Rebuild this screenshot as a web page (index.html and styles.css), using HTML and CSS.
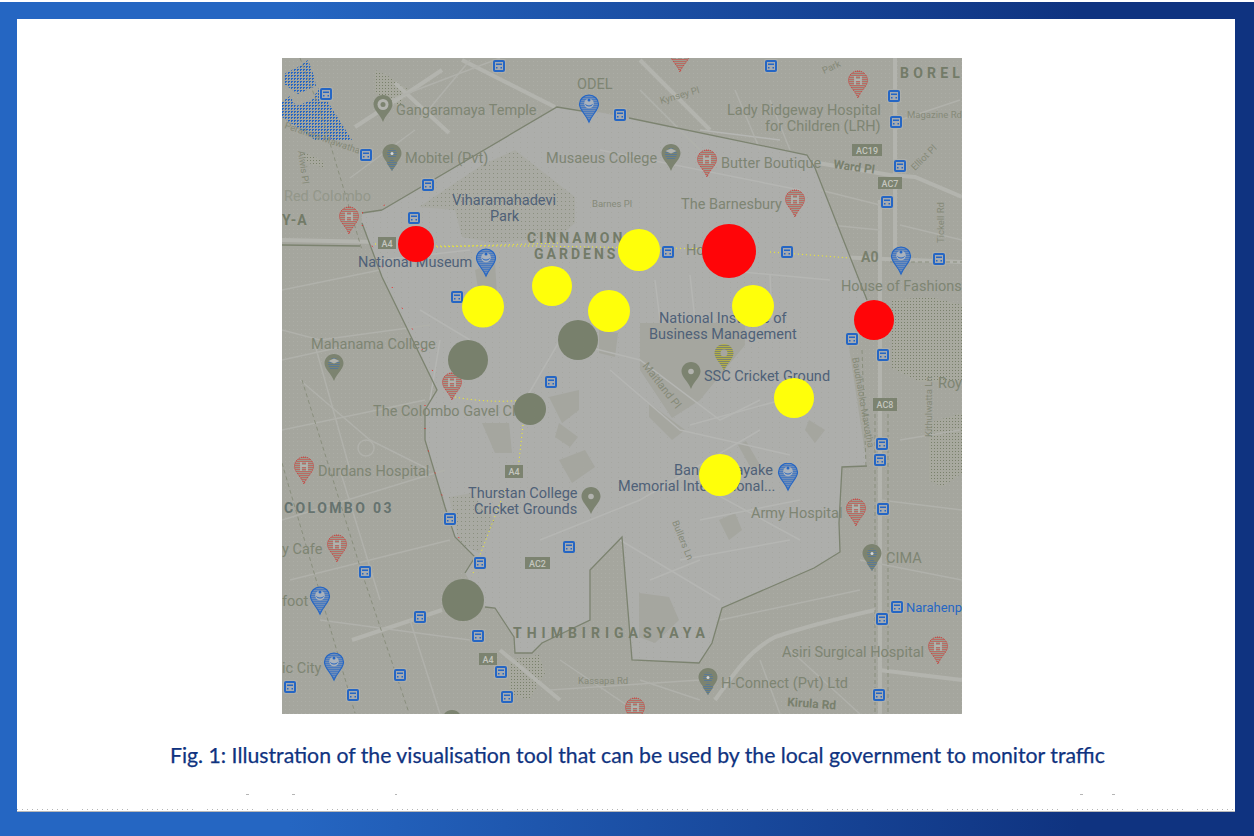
FILE: index.html
```html
<!DOCTYPE html>
<html lang="en">
<head>
<meta charset="utf-8">
<title>Fig. 1</title>
<link rel="stylesheet" href="styles.css">
</head>
<body>
<main class="frame">
<figure class="panel">
<svg class="map" viewBox="282 58 680 656" width="680" height="656" role="img" aria-label="Traffic map of Colombo">
<defs>
<pattern id="speck" width="4" height="4" patternUnits="userSpaceOnUse"><rect x="1" y="1" width="1" height="1" fill="#acada6"/></pattern>
<pattern id="speck-light" width="7" height="5" patternUnits="userSpaceOnUse"><rect x="2" y="2" width="1" height="1" fill="#a6a7a1"/></pattern>
<pattern id="park" width="3" height="3" patternUnits="userSpaceOnUse"><rect width="3" height="3" fill="#a8a99f"/><rect x="1" y="1" width="1" height="1" fill="#7a816c"/></pattern>
<pattern id="park-thin" width="4" height="4" patternUnits="userSpaceOnUse"><rect width="4" height="4" fill="#a9aaa3"/><rect x="1" y="1" width="1" height="1" fill="#8b9080"/></pattern>
<pattern id="water" width="3" height="3" patternUnits="userSpaceOnUse"><rect width="3" height="3" fill="#a4a59d"/><rect width="2" height="1" fill="#2566c4"/><rect y="1" width="1" height="1" fill="#2566c4"/></pattern>
<pattern id="dot-blue" width="2" height="2" patternUnits="userSpaceOnUse"><rect width="2" height="2" fill="#6f8db8"/><rect width="1" height="1" fill="#2566c4"/></pattern>
<pattern id="dot-red" width="2" height="2" patternUnits="userSpaceOnUse"><rect width="2" height="2" fill="#9a9c90"/><rect width="1" height="1" fill="#d83a38"/></pattern>
<pattern id="dot-mix" width="2" height="2" patternUnits="userSpaceOnUse"><rect width="2" height="2" fill="#7c8370"/><rect width="1" height="1" fill="#e8d820"/></pattern>
<pattern id="dot-slate" width="2" height="2" patternUnits="userSpaceOnUse"><rect width="2" height="2" fill="#7c8370"/><rect width="1" height="1" fill="#3a6fb8"/></pattern>
<path id="drop" d="M9.5 0C4.2 0 0 4.1 0 9.3c0 5.8 6.200 9.600 9.500 17.700C12.800 18.900 19 15.100 19 9.300 19 4.100 14.800 0 9.500 0z"/>
<symbol id="pin-blue" viewBox="0 0 19 27" width="19" height="27" overflow="visible"><use href="#drop" fill="url(#dot-blue)" stroke="#2566c4" stroke-width="1.200"/><circle cx="9.500" cy="8.500" r="4.800" fill="#a9b2bd"/><circle cx="9.500" cy="5" r="1.500" fill="#2566c4"/><path d="M6 9.500c1.500 2 5.500 2 7 0" fill="none" stroke="#2566c4"/></symbol>
<symbol id="pin-red" viewBox="0 0 19 27" width="19" height="27" overflow="visible"><use href="#drop" fill="url(#dot-red)" stroke="#c9403c" stroke-dasharray="1 1"/><path d="M6.500 5v9M12.500 5v9M6.500 9h6" stroke="#b2b3ae" stroke-width="1.800" fill="none"/></symbol>
<symbol id="pin-gray" viewBox="0 0 19 27" width="19" height="27" overflow="visible"><use href="#drop" fill="#7c8370"/><circle cx="9.500" cy="9.500" r="2.800" fill="#b2b3ae"/></symbol>
<symbol id="pin-slate" viewBox="0 0 19 27" width="19" height="27" overflow="visible"><use href="#drop" fill="#7c8370"/><path d="M9.500 15L15 19 9.500 27 4 19z" fill="url(#dot-slate)"/><circle cx="9.500" cy="9.500" r="5" fill="url(#dot-slate)"/><circle cx="9.500" cy="9.500" r="1.500" fill="#d8d8d4"/></symbol>
<symbol id="pin-temple" viewBox="0 0 19 27" width="19" height="27" overflow="visible"><use href="#drop" fill="#7c8370"/><circle cx="9.500" cy="9.500" r="5.500" fill="#b2b3ae"/><circle cx="9.500" cy="9.500" r="2.500" fill="#7c8370"/></symbol>
<symbol id="pin-school" viewBox="0 0 19 27" width="19" height="27" overflow="visible"><use href="#drop" fill="#7c8370"/><circle cx="9.500" cy="10" r="6" fill="url(#dot-slate)"/><path d="M4 7l5.500-2.500L15 7l-5.500 2.500z" fill="#b2b3ae"/></symbol>
<symbol id="pin-mix" viewBox="0 0 19 27" width="19" height="27" overflow="visible"><use href="#drop" fill="url(#dot-mix)"/><circle cx="9.500" cy="9" r="3.500" fill="#a6a69e"/></symbol>
<symbol id="bus" viewBox="-2 -2 16 16" width="16" height="16"><rect x="-1" y="-1" width="14" height="14" rx="2" fill="#aeafa9"/><rect x="1" y="1" width="10" height="10" rx="1" fill="#a5aab0" stroke="#2566c4" stroke-width="2"/><rect x="3" y="3.500" width="6" height="1.500" fill="#2566c4"/><rect x="3" y="7" width="1.500" height="1.500" fill="#2566c4"/><rect x="7.500" y="7" width="1.500" height="1.500" fill="#2566c4"/></symbol>
</defs>

<rect class="land" x="282" y="58" width="680" height="656"/>
<rect x="282" y="58" width="680" height="656" fill="url(#speck)"/>

<polygon fill="url(#water)" points="284,74 300,66 308,60 314,76 316,86 298,94 284,84"/>
<polygon fill="url(#water)" points="282,102 290,96 296,106 312,100 319,88 352,140 315,140 282,117"/>
<polygon fill="url(#park)" points="375,70 388,76 409,90 399,107 375,93"/>
<polygon fill="url(#park)" points="302,152 322,160 325,168 305,162"/>
<polygon fill="url(#park)" points="892,300 930,297 962,305 962,382 920,382 892,368"/>
<polygon fill="url(#park)" points="929,423 962,413 962,473 942,487 929,480"/>
<polygon fill="url(#park)" points="509,660 539,655 545,673 529,700 509,693"/>

<g class="road">
<path d="M282 240L380 242 620 248 860 258 962 262"/>
<path d="M880 200V714"/>
<path d="M895 58V250"/>
<path d="M715 700C735 672 750 650 775 637 810 625 840 618 875 610"/>
<path d="M879 670L962 680"/>
<path d="M352 640L442 610"/>
<path d="M355 127L415 88 442 70"/>
<path d="M395 83L449 133"/>
<path d="M462 60L555 107"/>
<path d="M640 60L710 130"/>
<path d="M800 160L890 175 915 177 962 197"/>
<path d="M500 650L560 700"/>
<path d="M540 155L620 250"/>
</g>

<polygon class="district" points="382,210 557,107 588,110 629,118 807,155 815,168 867,300 849,347 867,466 842,467 839,523 840,552 814,568 722,608 712,643 699,663 632,660 622,537 590,570 590,620 542,643 532,653 515,653 514,637 495,608 485,607 465,573 475,557 455,537 445,507 425,440 425,410 437,390 382,277 362,223 362,213"/>
<polygon points="382,210 557,107 588,110 629,118 807,155 815,168 867,300 849,347 867,466 842,467 839,523 840,552 814,568 722,608 712,643 699,663 632,660 622,537 590,570 590,620 542,643 532,653 515,653 514,637 495,608 485,607 465,573 475,557 455,537 445,507 425,440 425,410 437,390 382,277 362,223 362,213" fill="url(#speck-light)"/>

<polygon class="block" points="640,323 745,323 745,345 700,400 672,418 640,370"/>
<polygon class="block" points="549,397 579,390 579,410 562,423"/>
<polygon class="block" points="482,423 509,423 512,453 495,453"/>
<polygon class="block" points="559,460 585,450 595,467 572,483"/>
<polygon class="block" points="559,423 578,437 570,447 555,437"/>
<polygon class="block" points="649,403 685,430 672,440 649,417"/>
<polygon class="block" points="719,520 735,513 742,530 729,540"/>
<polygon class="block" points="809,420 825,430 815,443 805,430"/>
<polygon class="block" points="738,445 746,441 760,465 752,470"/>
<polygon class="block" points="639,593 669,597 679,620 655,643 639,637"/>
<polygon class="block" points="599,330 618,333 615,357 599,353"/>
<polygon class="block" points="475,270 495,262 497,296 480,300"/>
<polygon fill="url(#park-thin)" points="419,207 482,165 515,150 575,197 575,223 559,237 495,243 462,237 455,210"/>
<polygon fill="url(#park-thin)" points="449,497 472,493 495,520 479,553 459,543"/>

<g class="road-light">
<path d="M525 400L560 340 640 360 720 420 760 400"/>
<path d="M690 425L800 395"/>
<path d="M610 370L680 430 790 455"/>
<path d="M540 540L640 500 760 430"/>
<path d="M620 540L720 600"/>
<path d="M380 260L470 250"/>
<path d="M690 480L800 540"/>
<path d="M700 130L780 140"/>
<path d="M600 150L800 190"/>
<path d="M720 270L830 280"/>
<path d="M655 280L660 320M690 275L695 320M770 275L772 320"/>
<path d="M700 520L800 500M680 560L790 540M650 580L700 560"/>
<path d="M420 310L470 340M440 340L430 400"/>
</g>

<g class="street">
<path d="M282 330L320 340 430 325"/>
<path d="M300 380L370 440 430 470"/>
<path d="M282 430L425 400"/>
<path d="M282 520L445 470"/>
<path d="M290 580L450 540"/>
<path d="M320 620L470 640"/>
<path d="M410 620L440 714"/>
<path d="M282 290L380 270"/>
<path d="M282 360L350 345M315 345L350 470M340 470L380 600"/>
<path d="M390 100L500 58"/>
<path d="M420 120L470 60"/>
<path d="M350 178L415 130"/>
<path d="M640 90L700 150"/>
<path d="M735 90L760 150"/>
<path d="M770 100L790 150"/>
<path d="M900 120L960 100"/>
<path d="M900 225L962 240"/>
<path d="M820 190L880 205M830 225L880 230"/>
<path d="M900 440L960 430"/>
<path d="M880 500L962 510"/>
<path d="M860 560L962 580"/>
<path d="M790 650L860 714"/>
<path d="M760 660L780 714"/>
<path d="M560 660L640 714"/>
<path d="M550 690L700 680"/>
<path d="M640 680L700 700M720 620L860 590"/>
<circle cx="366" cy="448" r="8"/>
</g>

<g class="border">
<path d="M382 210L557 107 588 112M629 118L807 155 815 168 867 300"/>
<path d="M867 466L842 467 839 523 840 552 814 568 722 608 712 643 699 663 632 660 622 537 590 570 590 620 542 643 532 653 515 653 514 637 495 608 485 607"/>
<path d="M465 573L475 557 455 537 445 507 425 440 425 410 437 390 382 277 362 223"/>
<path d="M362 213L382 210"/>
<path d="M282 245L360 246"/>
</g>
<g class="dash">
<path d="M300 58L320 110 362 250"/>
<path d="M302 380L362 573 409 713"/>
<path d="M282 463L355 713"/>
<path d="M890 262H962"/>
<path d="M875 400V714M888 400V714"/>
<path d="M862 350L866 466"/>
</g>

<g class="traffic-yellow">
<path d="M375 244H398M436 246L530 246 720 249M770 252L850 258M437 247L560 243"/>
<path d="M455 397C480 402 510 402 522 400M523 425L518 470M505 490L480 555L472 576"/>
</g>
<g class="traffic-red">
<path d="M362 213L385 205M362 225L437 380M425 405V440L445 505 462 545"/>
</g>

<g class="label">
<text x="396" y="115">Gangaramaya Temple</text>
<text x="405" y="163">Mobitel (Pvt)</text>
<text class="faint" x="284" y="201">Red Colombo</text>
<text x="311" y="349">Mahanama College</text>
<text x="546" y="163">Musaeus College</text>
<text x="721" y="168">Butter Boutique</text>
<text x="681" y="209">The Barnesbury</text>
<text x="727" y="115">Lady Ridgeway Hospital</text>
<text x="765" y="131">for Children (LRH)</text>
<text x="841" y="291">House of Fashions</text>
<text x="938" y="388">Roy</text>
<text x="373" y="416">The Colombo Gavel Club</text>
<text x="318" y="476">Durdans Hospital</text>
<text x="751" y="518">Army Hospital</text>
<text x="886" y="563">CIMA</text>
<text x="782" y="657">Asiri Surgical Hospital</text>
<text x="721" y="688">H-Connect (Pvt) Ltd</text>
<text x="282" y="554">y Cafe</text>
<text x="282" y="606">foot</text>
<text x="282" y="673">ic City</text>
<text x="577" y="89">ODEL</text>
<text x="686" y="255">Ho</text>
</g>
<g class="label poi">
<text x="452" y="205">Viharamahadevi</text>
<text x="490" y="221">Park</text>
<text x="358" y="267">National Museum</text>
<text x="659" y="323">National Institute of</text>
<text x="649" y="339">Business Management</text>
<text x="704" y="381">SSC Cricket Ground</text>
<text x="468" y="498">Thurstan College</text>
<text x="474" y="514">Cricket Grounds</text>
<text x="674" y="475">Bandaranayake</text>
<text x="618" y="491">Memorial International...</text>
<text class="blue" x="906" y="612">Narahenp</text>
</g>
<g class="area">
<text x="527" y="243">CINNAMON</text>
<text x="534" y="259">GARDENS</text>
<text class="wide" x="900" y="78">BOREL</text>
<text class="widest" x="513" y="638">THIMBIRIGASYAYA</text>
<text class="slate" x="284" y="513">COLOMBO 03</text>
<text class="tight" x="282" y="225">Y-A</text>
</g>
<g class="street-name">
<text x="661" y="104" transform="rotate(-16 661 104)">Kynsey Pl</text>
<text x="824" y="74" transform="rotate(-25 824 74)">Park</text>
<text x="284" y="128" transform="rotate(19 284 128)">Perahera Mawatha</text>
<text x="298" y="151" transform="rotate(82 298 151)">Alwis Pl</text>
<text x="592" y="207">Barnes Pl</text>
<text x="907" y="118">Magazine Rd</text>
<text x="915" y="171" transform="rotate(-45 915 171)">Elliot Pl</text>
<text x="944" y="243" transform="rotate(-90 944 243)">Tickell Rd</text>
<text x="852" y="358" transform="rotate(80 852 358)">Baudhaloka Mawatha</text>
<text x="932" y="437" transform="rotate(-90 932 437)">Kithulwatta Ln</text>
<text class="big" x="642" y="366" transform="rotate(52 642 366)">Maitland Pl</text>
<text x="672" y="522" transform="rotate(68 672 522)">Bullers Ln</text>
<text x="578" y="684">Kassapa Rd</text>
<text class="strong" x="833" y="168" transform="rotate(8 833 168)">Ward Pl</text>
<text class="strong" x="787" y="706" transform="rotate(4 787 706)">Kirula Rd</text>
<text class="strong a0" x="861" y="262">A0</text>
</g>

<g class="shield">
<rect x="378" y="237" width="18" height="12"/><rect x="505" y="465" width="18" height="13"/><rect x="479" y="653" width="18" height="12"/>
<rect x="852" y="144" width="30" height="12"/><rect x="878" y="177" width="24" height="12"/><rect x="873" y="398" width="24" height="13"/><rect x="525" y="557" width="25" height="12"/>
</g>
<g class="shield-text">
<text x="387" y="247">A4</text><text x="514" y="475">A4</text><text x="488" y="663">A4</text>
<text x="867" y="154">AC19</text><text x="890" y="187">AC7</text><text x="885" y="408">AC8</text><text x="537.500" y="567">AC2</text>
</g>

<use href="#pin-temple" x="373.500" y="95"/>
<use href="#pin-slate" x="382.500" y="144"/>
<use href="#pin-blue" x="579.500" y="95"/>
<use href="#pin-blue" x="476.500" y="249"/>
<use href="#pin-red" x="339.500" y="207"/>
<use href="#pin-school" x="324.500" y="354"/>
<use href="#pin-red" x="442.500" y="373"/>
<use href="#pin-school" x="661.500" y="144"/>
<use href="#pin-red" x="697.500" y="150"/>
<use href="#pin-red" x="785.500" y="190"/>
<use href="#pin-red" x="670.500" y="45"/>
<use href="#pin-red" x="848.500" y="71"/>
<use href="#pin-blue" x="891.500" y="247"/>
<use href="#pin-gray" x="681.500" y="362"/>
<use href="#pin-mix" x="714.500" y="344"/>
<use href="#pin-red" x="294.500" y="457"/>
<use href="#pin-red" x="327.500" y="535"/>
<use href="#pin-blue" x="310.500" y="587"/>
<use href="#pin-blue" x="324.500" y="653"/>
<use href="#pin-gray" x="581.500" y="487"/>
<use href="#pin-blue" x="778.500" y="463"/>
<use href="#pin-red" x="846.500" y="499"/>
<use href="#pin-slate" x="862.500" y="544"/>
<use href="#pin-red" x="928.500" y="637"/>
<use href="#pin-slate" x="698.500" y="668"/>
<use href="#pin-red" x="625.500" y="698"/>
<use href="#pin-gray" x="442.500" y="710"/>

<use href="#bus" x="491" y="58"/><use href="#bus" x="318" y="86"/><use href="#bus" x="358" y="147"/><use href="#bus" x="420" y="177"/><use href="#bus" x="406" y="210"/><use href="#bus" x="449" y="289"/><use href="#bus" x="543" y="374"/><use href="#bus" x="612" y="107"/>
<use href="#bus" x="763" y="58"/><use href="#bus" x="886" y="88"/><use href="#bus" x="888" y="114"/><use href="#bus" x="892" y="158"/><use href="#bus" x="879" y="194"/><use href="#bus" x="660" y="244"/><use href="#bus" x="779" y="244"/><use href="#bus" x="931" y="251"/><use href="#bus" x="844" y="331"/><use href="#bus" x="875" y="347"/>
<use href="#bus" x="442" y="511"/><use href="#bus" x="472" y="555"/><use href="#bus" x="357" y="564"/><use href="#bus" x="412" y="609"/><use href="#bus" x="470" y="628"/><use href="#bus" x="493" y="664"/><use href="#bus" x="499" y="689"/><use href="#bus" x="392" y="667"/><use href="#bus" x="345" y="687"/><use href="#bus" x="282" y="679"/><use href="#bus" x="561" y="539"/>
<use href="#bus" x="874" y="436"/><use href="#bus" x="872" y="452"/><use href="#bus" x="875" y="501"/><use href="#bus" x="874" y="611"/><use href="#bus" x="889" y="599"/><use href="#bus" x="871" y="687"/>

<g class="spot-red"><circle cx="416" cy="244" r="18"/><circle cx="729" cy="251" r="27"/><circle cx="874" cy="320" r="20"/></g>
<g class="spot-yellow"><circle cx="483" cy="306.500" r="21"/><circle cx="552" cy="286" r="20"/><circle cx="609" cy="311" r="21"/><circle cx="639" cy="250" r="21"/><circle cx="753" cy="306" r="21"/><circle cx="794" cy="398" r="20"/><circle cx="720" cy="475" r="21"/></g>
<g class="spot-gray"><circle cx="578" cy="340" r="20"/><circle cx="468" cy="360" r="20"/><circle cx="530" cy="409" r="16"/><circle cx="463" cy="600" r="21"/></g>
</svg>
<figcaption class="caption">Fig. 1: Illustration of the visualisation tool that can be used by the local government to monitor traffic</figcaption>
<div class="dashes" aria-hidden="true"></div>
<div class="dots" aria-hidden="true"></div>
</figure>
</main>
</body>
</html>
```

FILE: styles.css
```css
html, body {
  margin: 0;
  padding: 0;
  background: #fff;
}
body {
  padding-top: 2px;
  width: 1254px;
  height: 834px;
  overflow: hidden;
}
.frame {
  box-sizing: border-box;
  height: 834px;
  padding: 17px 19px 24px 17px;
  background: linear-gradient(90deg, #2566c2 0, #2566c2 23%, #0f3380 86%, #0f3380 100%);
}
.panel {
  box-sizing: border-box;
  margin: 0;
  height: 793px;
  background: #fff;
  border-bottom: 1px solid #b9b9b9;
  padding: 39px 0 0 265px;
  display: flex;
  flex-direction: column;
  align-items: flex-start;
}
.map {
  display: block;
  flex: none;
  font-family: Roboto, "Liberation Sans", sans-serif;
}
.caption {
  margin: 29px 0 0 -112px;
  font: 400 21.240px/24px Lato, "Liberation Sans", sans-serif;
  -webkit-text-stroke: 0.25px #0f3380;
  color: #0f3380;
  white-space: nowrap;
}
.dashes {
  margin: 27px 0 0 -265px;
  width: 1218px;
  height: 1px;
  background:
    linear-gradient(#b5b5b5, #b5b5b5) 229px 0 / 3px 1px no-repeat,
    linear-gradient(#b5b5b5, #b5b5b5) 275px 0 / 3px 1px no-repeat,
    linear-gradient(#b5b5b5, #b5b5b5) 378px 0 / 2px 1px no-repeat,
    linear-gradient(#b5b5b5, #b5b5b5) 1063px 0 / 3px 1px no-repeat,
    linear-gradient(#b5b5b5, #b5b5b5) 1095px 0 / 3px 1px no-repeat;
}
.dots {
  margin: 14px 0 0 -265px;
  width: 1218px;
  height: 1px;
  background: repeating-linear-gradient(90deg, #b5b5b5 0 1px, transparent 1px 5px);
  -webkit-mask-image: repeating-linear-gradient(90deg, #000 0 52px, transparent 52px 62px);
  mask-image: repeating-linear-gradient(90deg, #000 0 52px, transparent 52px 62px);
}

.land { fill: #a5a69e; }
.district { fill: #adaeab; }
.block { fill: #a5a69f; }
.road path { fill: none; stroke: #b3b4ae; stroke-width: 4; }
.road-light path { fill: none; stroke: #b5b6b3; stroke-width: 1.500; }
.street path, .street circle { fill: none; stroke: #b0b1ab; stroke-width: 1.500; }
.border path { fill: none; stroke: #7c8370; stroke-width: 1.300; }
.dash path { fill: none; stroke: #8a8f7e; stroke-width: 1; stroke-dasharray: 4 3; }
.traffic-yellow path { fill: none; stroke: #f5f020; stroke-width: 1; stroke-dasharray: 1 3; }
.traffic-red path { fill: none; stroke: #e22; stroke-width: 1; stroke-dasharray: 1 22; }

.label text { font-size: 14.500px; fill: #7e8573; }
.label .faint { fill: #93978a; }
.poi text { fill: #4f6178; }
.poi .blue { font-size: 13px; fill: #2566c4; }
.area text { font-size: 14px; font-weight: 700; letter-spacing: 3px; fill: #737b68; }
.area .wide { letter-spacing: 4.200px; }
.area .widest { letter-spacing: 5px; }
.area .tight { letter-spacing: 1px; }
.area .slate { fill: #66736f; letter-spacing: 2.400px; }
.street-name text { font-size: 9.500px; fill: #858a79; }
.street-name .big { font-size: 11px; }
.street-name .strong { font-size: 12px; font-weight: 700; fill: #79806d; }
.street-name .a0 { font-size: 14px; }
.shield rect { fill: #7c8370; }
.shield-text text { font-size: 9px; font-weight: 500; text-anchor: middle; fill: #c4c6bf; }
.spot-red circle { fill: #ff0508; }
.spot-yellow circle { fill: #ffff0a; }
.spot-gray circle { fill: #78806c; }
```
